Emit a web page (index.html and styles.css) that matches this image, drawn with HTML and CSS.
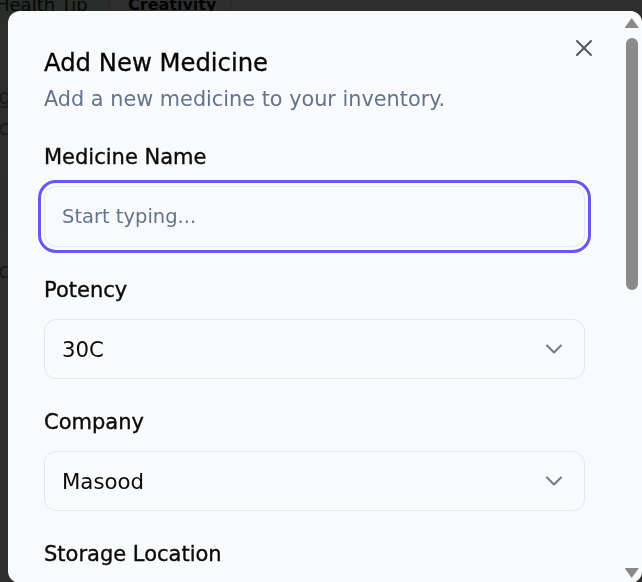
FILE: index.html
```html
<!DOCTYPE html>
<html lang="en">
<head>
<meta charset="utf-8">
<title>Add New Medicine</title>
<link rel="stylesheet" href="styles.css">
</head>
<body>
<div class="page">
  <div class="tabs">
    <div class="tab tab-active">Health Tip</div>
    <div class="tab tab-bold">Creativity</div>
    <div class="tab tab-empty"></div>
  </div>
  <div class="page-body">
    <p class="bg-line">gentle care</p>
    <p class="bg-line">cures and tips</p>
    <div class="bg-card"></div>
    <p class="bg-line">caring daily</p>
  </div>
</div>
<div class="overlay"></div>
<div class="modal" role="dialog" aria-labelledby="dlg-title">
  <div class="modal-content">
    <button class="close" aria-label="Close">
      <svg width="28" height="28" viewBox="0 0 24 24" fill="none" stroke="currentColor" stroke-width="1.6" stroke-linecap="round" stroke-linejoin="round"><path d="M18 6 6 18"/><path d="m6 6 12 12"/></svg>
    </button>
    <div class="modal-head">
      <h2 id="dlg-title" class="title">Add New Medicine</h2>
      <p class="subtitle">Add a new medicine to your inventory.</p>
    </div>
    <form class="form">
      <div class="field">
        <label class="label" for="name">Medicine Name</label>
        <input id="name" class="input input-focus" placeholder="Start typing...">
      </div>
      <div class="field">
        <span class="label">Potency</span>
        <div class="select"><span>30C</span>
          <svg class="chev" width="28" height="28" viewBox="0 0 24 24" fill="none" stroke="currentColor" stroke-width="1.7" stroke-linecap="round" stroke-linejoin="round"><path d="m6 9 6 6 6-6"/></svg>
        </div>
      </div>
      <div class="field">
        <span class="label">Company</span>
        <div class="select"><span>Masood</span>
          <svg class="chev" width="28" height="28" viewBox="0 0 24 24" fill="none" stroke="currentColor" stroke-width="1.7" stroke-linecap="round" stroke-linejoin="round"><path d="m6 9 6 6 6-6"/></svg>
        </div>
      </div>
      <div class="field">
        <span class="label">Storage Location</span>
        <div class="select"><span>Shelf A</span>
          <svg class="chev" width="28" height="28" viewBox="0 0 24 24" fill="none" stroke="currentColor" stroke-width="1.7" stroke-linecap="round" stroke-linejoin="round"><path d="m6 9 6 6 6-6"/></svg>
        </div>
      </div>
      <div class="field">
        <span class="label">Quantity</span>
        <input class="input" placeholder="0">
      </div>
      <div class="field">
        <span class="label">Expiry Date</span>
        <input class="input" placeholder="dd/mm/yyyy">
      </div>
    </form>
  </div>
  <div class="scrollbar" aria-hidden="true">
    <div class="sb-btn">
      <svg width="18" height="24" viewBox="0 0 18 24"><path d="M1.5 16.5 L7.7 8 L14 16.5 Z" fill="#8a8a8a" stroke="#8a8a8a" stroke-width="1.2" stroke-linejoin="round"/></svg>
    </div>
    <div class="sb-track"><div class="sb-thumb"></div></div>
    <div class="sb-btn">
      <svg width="18" height="24" viewBox="0 0 18 24"><path d="M1.5 9.5 L14 9.5 L7.7 18 Z" fill="#8a8a8a" stroke="#8a8a8a" stroke-width="1.2" stroke-linejoin="round"/></svg>
    </div>
  </div>
</div>
</body>
</html>
```
FILE: styles.css
```css
html, body {
  margin: 0;
  height: 100%;
  overflow: hidden;
}
body {
  font-family: "DejaVu Sans", "Noto Sans", sans-serif;
  background: #ffffff;
  color: #0a0a0a;
}
.page {
  height: 100%;
}
.tabs {
  display: flex;
  margin-top: -12px;
  margin-left: -22px;
  height: 36px;
}
.tab {
  padding: 6px 18px;
  font-size: 18px;
  color: #1f2a1f;
  border-right: 1px solid #cfcfcf;
  white-space: nowrap;
}
.tab-active {
  width: 95px;
  background: #e6f0e6;
  color: #16351a;
}
.tab-bold {
  font-weight: 700;
  font-size: 16px;
  line-height: 22px;
  color: #111;
  width: 84px;
}
.tab-empty {
  flex: 1;
  border-right: 0;
}
.page-body {
  padding: 60px 0 0 0;
  margin-left: -2px;
  color: #8f8f8f;
  font-size: 22px;
}
.bg-line {
  margin: 0 0 6px;
}
.bg-card {
  height: 46px;
  margin: 40px 0 30px;
  background: #f6f6f6;
  border-top: 1px solid #ececec;
  border-bottom: 1px solid #ececec;
}
.overlay {
  position: fixed;
  inset: 0;
  background: rgba(0, 0, 0, 0.82);
}
.modal {
  position: fixed;
  left: 8px;
  top: 11px;
  width: 634px;
  height: 572px;
  background: #f8fafc;
  border-radius: 12px;
  overflow: hidden;
  display: grid;
  grid-template-columns: 1fr 18px;
}
.modal-content {
  position: relative;
  overflow: hidden;
  padding: 36px 39px 36px 36px;
}
.scrollbar {
  display: flex;
  flex-direction: column;
  background: #f8fafc;
}
.sb-btn {
  height: 24px;
  flex: none;
}
.sb-btn svg {
  display: block;
}
.sb-track {
  flex: 1;
  padding: 3px 4px 0 1.7px;
}
.sb-thumb {
  width: 12px;
  height: 252px;
  border-radius: 6px;
  background: #8a8a8a;
}
.close {
  position: absolute;
  top: 23px;
  right: 26px;
  width: 28px;
  height: 28px;
  padding: 0;
  border: 0;
  background: transparent;
  color: #4b5563;
  display: flex;
}
.modal-head {
  display: flex;
  flex-direction: column;
  gap: 6px;
}
.title {
  margin: 0;
  font-size: 24.3px;
  line-height: 32px;
  font-weight: 400;
  color: #050505;
  -webkit-text-stroke: 0.3px currentColor;
}
.subtitle {
  margin: 0;
  font-size: 20.8px;
  line-height: 28px;
  color: #64748b;
}
.form {
  margin-top: 30px;
  display: flex;
  flex-direction: column;
  gap: 29px;
}
.field {
  display: flex;
  flex-direction: column;
  gap: 15px;
}
.label {
  font-size: 21px;
  line-height: 28px;
  color: #0a0a0a;
  -webkit-text-stroke: 0.35px currentColor;
}
.input, .select {
  box-sizing: border-box;
  width: 541px;
  height: 60px;
  border: 1px solid #e2e8f0;
  border-radius: 12px;
  background: #f8fafc;
  font-family: inherit;
}
.input {
  padding: 0 17px;
  font-size: 19.5px;
  color: #0a0a0a;
  outline: none;
}
.input::placeholder {
  color: #64748b;
}
.input-focus {
  height: 61px;
  box-shadow: 0 0 0 3px #f8fafc, 0 0 0 6px #6a55f2;
}
.select {
  display: flex;
  align-items: center;
  justify-content: space-between;
  padding: 0 16px 0 17px;
  font-size: 21.3px;
  color: #0a0a0a;
}
.chev {
  color: #737884;
}
```
